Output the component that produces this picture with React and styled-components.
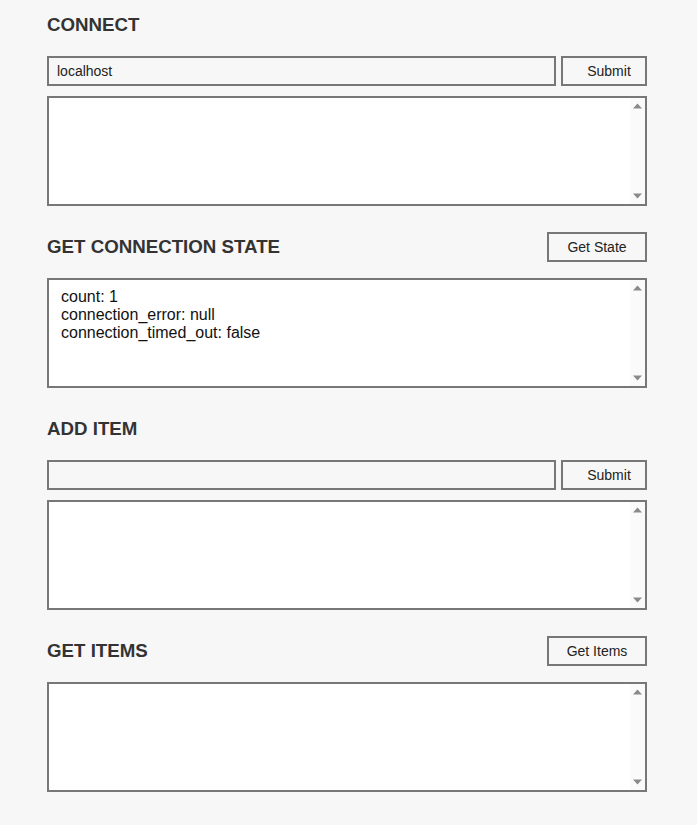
import React from "react";
import styled, { createGlobalStyle } from "styled-components";

const GlobalStyle = createGlobalStyle`
  body {
    margin: 0;
    background: #f7f7f7;
    font-family: "Liberation Sans", Arial, sans-serif;
    color: #222;
  }
`;

// scrollbar arrows painted into the textarea (headless hides real scrollbars)
const upArrow =
  "data:image/svg+xml;utf8,<svg xmlns='http://www.w3.org/2000/svg' width='15' height='15'><polygon points='3,9.5 7.5,4.5 12,9.5' fill='%238a8a8a'/></svg>";
const downArrow =
  "data:image/svg+xml;utf8,<svg xmlns='http://www.w3.org/2000/svg' width='15' height='15'><polygon points='3,4.5 12,4.5 7.5,9.5' fill='%238a8a8a'/></svg>";

const Page = styled.div`
  width: 600px;
  margin-left: 47px;
  padding-top: 10px;
`;

const Section = styled.section`
  margin-bottom: 26px;
`;

const HeaderRow = styled.div`
  display: flex;
  align-items: center;
  justify-content: space-between;
  height: 30px;
  margin-bottom: 16px;
`;

const Title = styled.h2`
  margin: 0;
  font-size: 18.72px;
  font-weight: bold;
  color: #333;
`;

const InputRow = styled.div`
  display: flex;
  gap: 5px;
  height: 30px;
  margin-bottom: 10px;
`;

const TextInput = styled.input`
  flex: 1;
  min-width: 0;
  box-sizing: border-box;
  height: 30px;
  border: 2px solid #777;
  background: #f7f7f7;
  padding: 0 8px;
  font-family: "Liberation Sans", Arial, sans-serif;
  font-size: 14px;
  color: #222;
  outline: none;
`;

const Button = styled.button`
  box-sizing: border-box;
  width: ${(p) => p.$width || 86}px;
  height: 30px;
  border: 2px solid #777;
  background: #f7f7f7;
  font-family: "Liberation Sans", Arial, sans-serif;
  font-size: 14px;
  color: #222;
  padding: 0 0 0 ${(p) => p.$shift || 0}px;
  cursor: pointer;
`;

const Output = styled.textarea`
  display: block;
  box-sizing: border-box;
  width: 100%;
  height: 110px;
  border: 2px solid #777;
  background-color: #fff;
  background-image: url("${upArrow}"), url("${downArrow}"),
    linear-gradient(#fafafa, #fafafa);
  background-repeat: no-repeat;
  background-position: right 0 top 1px, right 0 bottom 0, right 0 top 0;
  background-size: 15px 15px, 15px 15px, 15px 100%;
  padding: 8px 27px 6px 12px;
  font-family: "Liberation Sans", Arial, sans-serif;
  font-size: 16px;
  line-height: 18px;
  color: #111;
  resize: none;
  overflow: hidden;
  outline: none;
`;

export default function App() {
  return (
    <>
      <GlobalStyle />
      <Page>
        <Section>
          <HeaderRow>
            <Title>CONNECT</Title>
          </HeaderRow>
          <InputRow>
            <TextInput defaultValue="localhost" />
            <Button $shift={10}>Submit</Button>
          </InputRow>
          <Output readOnly value="" />
        </Section>

        <Section>
          <HeaderRow>
            <Title>GET CONNECTION STATE</Title>
            <Button $width={100}>Get State</Button>
          </HeaderRow>
          <Output
            readOnly
            value={"count: 1\nconnection_error: null\nconnection_timed_out: false"}
          />
        </Section>

        <Section>
          <HeaderRow>
            <Title>ADD ITEM</Title>
          </HeaderRow>
          <InputRow>
            <TextInput defaultValue="" />
            <Button $shift={10}>Submit</Button>
          </InputRow>
          <Output readOnly value="" />
        </Section>

        <Section>
          <HeaderRow>
            <Title>GET ITEMS</Title>
            <Button $width={100}>Get Items</Button>
          </HeaderRow>
          <Output readOnly value="" />
        </Section>
      </Page>
    </>
  );
}
